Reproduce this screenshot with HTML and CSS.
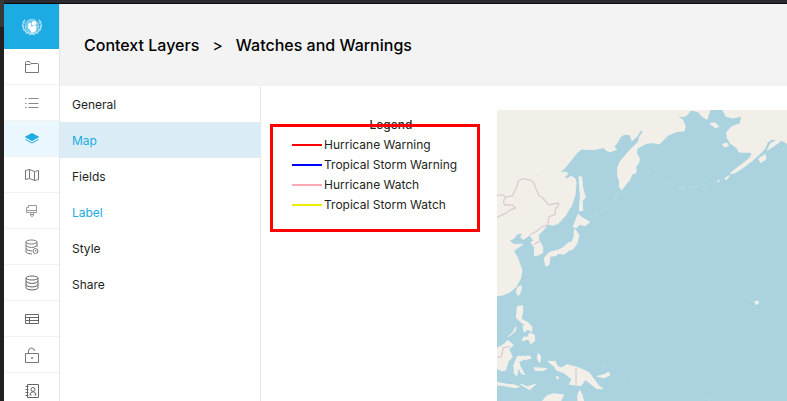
FILE: index.html
```html
<!DOCTYPE html>
<html lang="en">
<head>
<meta charset="utf-8">
<meta name="viewport" content="width=device-width, initial-scale=1">
<title>Watches and Warnings</title>
<link rel="stylesheet" href="styles.css">
</head>
<body>
<div class="app">
  <nav class="rail" aria-label="Main">
    <a class="rail-logo" href="#" aria-label="Home">
      <svg width="20" height="18" viewBox="0 0 60 54" fill="none" stroke="#fff">
        <circle cx="30" cy="24" r="20" fill="#6cc6ec" stroke="#c5e8f7" stroke-width="2"/>
        <path d="M13 24h34M17 12q13 9 26 0M17 36q13-9 26 0" stroke="#c5e8f7" stroke-width="1"/>
        <circle cx="36" cy="16" r="7" fill="#fff" stroke="none"/>
        <path d="M31 24q7-4 13 2l-3 14-12 4-5-9-7-6 4-8 5-1 4 9z" fill="#fff" stroke="none"/>
        <circle cx="23" cy="20" r="5" fill="#fff" stroke="none"/>
        <path d="M9 5Q-3 20 6 34q8 13 24 13t24-13q9-14-3-29" stroke="#b5e2f5" stroke-width="4"/>
        <path d="M3 9l6 8M0 22l8 5M2 35l9 1M11 46l9-3M57 9l-6 8M60 22l-8 5M58 35l-9 1M49 46l-9-3M21 52l9-5 9 5" stroke="#b5e2f5" stroke-width="3"/>
      </svg>
    </a>
    <a href="#" aria-label="Projects"><svg class="icon" viewBox="0 0 14 14"><path d="M.5 12.5v-10q0-1 1-1h3l1.500 2h6.500q1 0 1 1v8zM.5 4.500h5"/></svg></a>
    <a href="#" aria-label="List"><svg class="icon list" viewBox="0 0 14 14"><path d="M3.500 2.500h10M3.500 7.500h10M3.500 11.500h10M0 2.500h1.500M0 7.500h1.500M0 11.500h1.500"/></svg></a>
    <a class="current" href="#" aria-label="Context layers"><svg class="icon layers" viewBox="0 0 14 14"><path d="M7 1.500 13.500 5 7 8.500.5 5z"/><path class="edge" d="M.5 7.500 7 11l6.500-3.500"/></svg></a>
    <a href="#" aria-label="Maps"><svg class="icon" viewBox="0 0 14 14"><path d="m.5 2.500 4-1 5 2 4-1v9l-4 1-5-2-4 1zM4.500 1.500v9M9.500 3.500v9"/></svg></a>
    <a href="#" aria-label="Styles"><svg class="icon brush" viewBox="0 0 14 14"><path d="M3.500 1.500h8v5h-10v-3h2zM1.500 6.500v2h10v-2M5.500 8.500v3q1.500 2 3 0v-3M6 10.500h2M11.500 2v4"/></svg></a>
    <a href="#" aria-label="Data settings"><svg class="icon" viewBox="0 0 14 16"><ellipse cx="6.500" cy="3" rx="5.500" ry="2"/><path d="M1 3v10q1 2 6 2M12 3v5M1 6q1 2.500 5.500 2.500T12 6M1 9.500Q2 12 7 12"/><circle cx="10.500" cy="12" r="2.500"/><path d="M10.500 11v1h1"/></svg></a>
    <a href="#" aria-label="Database"><svg class="icon dark" viewBox="0 0 14 16"><ellipse cx="7" cy="3" rx="6" ry="2"/><path d="M1 3v10q1 2 6 2t6-2V3M1 6q1 2.500 6 2.500T13 6M1 9.500Q2 12 7 12t6-2.500"/></svg></a>
    <a href="#" aria-label="Tables"><svg class="icon dark" viewBox="0 0 14 14"><path d="M.5 2.500h13v9H.5zM.5 5.500h13M.5 8.500h13M4.500 5.500v6"/></svg></a>
    <a href="#" aria-label="Access"><svg class="icon" viewBox="0 0 14 16"><path d="M.5 6.500h13v9H.5zM3.500 6.500V4q0-3 3-3t3 3M6.500 10.500h1v1h-1z"/></svg></a>
    <a href="#" aria-label="Contacts"><svg class="icon dark" viewBox="0 0 14 14"><path d="M2.500.5h11v13h-11zM.5 2.500h3M.5 5.500h3M.5 8.500h3M.5 11.500h3M5 11q0-2.500 2-3h2q2 .5 2 3H9.500M5 11h1.500"/><circle cx="8" cy="5.500" r="2"/></svg></a>
  </nav>
  <div class="page">
    <header class="crumbs">
      <a href="#">Context Layers</a><span>&gt;</span><h1>Watches and Warnings</h1>
    </header>
    <div class="body">
      <nav class="tabs" aria-label="Layer">
        <a href="#">General</a>
        <a class="selected" href="#">Map</a>
        <a href="#">Fields</a>
        <a class="accent" href="#">Label</a>
        <a href="#">Style</a>
        <a href="#">Share</a>
      </nav>
      <main class="content">
        <section class="legend">
          <h2>Legend</h2>
          <ul>
            <li><i class="line red"></i>Hurricane Warning</li>
            <li><i class="line blue"></i>Tropical Storm Warning</li>
            <li><i class="line pink"></i>Hurricane Watch</li>
            <li><i class="line yellow"></i>Tropical Storm Watch</li>
          </ul>
          <div class="highlight"></div>
        </section>
        <div class="map">
          <svg viewBox="21 30 870 873" preserveAspectRatio="xMinYMin slice" role="img" aria-label="Map of the western Pacific">
            <g class="land">
              <path d="M21 30H602L592 44 582 50 560 48 578 60 586 80 582 93 562 94 535 105 520 120 508 132 490 128 470 130 454 138 441 146 440 160 448 175 446 190 438 198 438 218 425 224 419 240 408 252 395 270 388 260 389 245 383 228 383 203 390 185 405 168 420 150 445 126 448 112 460 94 452 91 440 110 426 122 420 104 402 103 390 112 382 128 371 141 380 148 362 155 350 152 340 143 310 149 275 147 262 157 240 185 225 203 208 219 225 216 235 221 222 231 232 236 244 229 256 237 258 250 255 285 245 315 225 348 205 370 188 376 173 372 163 387 145 405 147 421 158 440 158 458 145 465 133 467 134 443 123 427 132 423 119 405 101 418 92 412 98 399 81 402 72 415 58 421 70 433 98 433 83 444 70 453 83 474 88 490 96 511 92 534 78 561 58 577 38 585 21 587Z"/>
              <path d="M602 30 625 35 635 48 651 58 660 30ZM699 30 708 49 730 54 755 48 751 71 725 80 710 97 712 114 721 130 733 138 741 145 747 156 782 157 786 165 776 177 753 195 733 210 720 221 736 218 762 201 790 179 811 160 825 145 832 127 846 117 861 120 842 131 832 151 853 137 875 121 891 130V30Z"/>
              <path d="M660 71 675 68 686 79 677 84ZM698 133 710 129 716 137 703 141ZM806 176 825 164 828 177 812 188ZM704 235 718 227 709 240ZM681 244 690 240 685 246Z"/>
              <path d="M267 230 275 231 278 262 286 292 277 302 278 332 268 332 271 290ZM264 343 280 355 299 366 286 377 268 373 260 383 249 380 254 370ZM254 387 267 405 261 430 249 447 237 451 222 463 205 460 197 467 180 469 177 494 168 498 162 475 178 457 205 450 219 443 233 430 246 425 252 410ZM84 561 95 557 92 575 85 587 79 575Z"/>
              <path d="M82 620 98 617 98 637 93 656 110 667 108 674 91 665 79 653ZM111 665 126 680 125 695 114 688 103 696 99 680ZM119 699 133 705 134 723 122 731 116 717 97 722 101 711 113 712ZM78 680 76 693 55 710 70 695Z"/>
              <path d="M21 745 42 733 53 721 70 736 56 748 67 770 54 785 47 810 36 813 21 805ZM82 770 120 768 123 775 100 779 86 785 90 798 104 824 94 820 86 802 80 827 72 820 73 802 70 798 77 783ZM21 847 45 852 74 855 88 860 75 863 42 857 21 854ZM92 853 112 860 137 853 119 869ZM145 759 152 770 149 788 142 775ZM133 803 171 806 157 812 136 811Z"/>
              <path d="M174 784 196 784 201 798 213 804 232 794 267 804 298 818 308 833 325 855 338 867 319 865 300 850 286 838 273 857 238 853 246 837 221 818 199 810 194 800ZM322 829 345 823 355 816 360 825 342 833ZM158 903 170 888 190 881 221 885 212 903ZM264 903 263 887 269 871 276 885 281 903Z"/>
              <path d="M199 829 207 833 202 838ZM794 605 804 603 806 609 799 614Z"/>
            </g>
            <g class="islets">
              <path d="M299 353 323 341M333 334 355 325M372 300 388 273M455 150 462 153M472 210 478 220M528 243 541 254M568 263 589 265M597 262 624 260M634 257 649 254M662 250 700 238M763 586 793 600M142 226 151 219M170 525 178 513M337 795 355 803M374 826 387 837M394 839 409 851M420 855 438 874M648 896 660 901"/>
            </g>
            <path class="border" d="M21 287 37 284 47 291 67 288 81 260 84 243 98 236 119 240 130 246 147 287 156 291 176 315 206 309 205 318 197 324 195 344 177 350 173 375 157 380 139 394 119 405M47 291 40 304 44 315 67 315 77 324 60 330 45 341 21 352M132 433 152 422M21 772 34 770 40 743 60 739M258 804V856"/>
          </svg>
        </div>
      </main>
    </div>
  </div>
</div>
</body>
</html>
```

FILE: styles.css
```css
* { box-sizing: border-box; }

body {
  margin: 0;
  font-family: Inter, "Liberation Sans", sans-serif;
  font-size: 12px;
  color: #231f20;
}

a { color: inherit; text-decoration: none; }

.app {
  display: flex;
  height: 100vh;
  overflow: hidden;
  padding: 4px 0 0 4px;
  background:
    linear-gradient(#2b2a33 3px, #0c0c0d 3px) 4px 0 / 100% 4px no-repeat,
    linear-gradient(#38383a 27px, #231f20 27px) 0 0 / 4px 100% no-repeat,
    #fff;
}

.rail {
  flex: none;
  width: 56px;
  border-right: 1px solid #e5e5e5;
}

.rail a {
  display: flex;
  align-items: center;
  justify-content: center;
  height: 36px;
  border-bottom: 1px solid #f2f2f2;
}

.rail .rail-logo {
  height: 45px;
  border: 0;
  background: #1cabe2;
}

.rail .current { background: #ebf7fe; }

.icon {
  width: 14px;
  height: 16px;
  fill: none;
  stroke: #777;
  stroke-width: 1;
}

.icon.dark { stroke: #666; }
.icon.list { stroke: #888; }
.icon.brush { stroke: #999; }
.icon.layers { fill: #1cabe2; stroke: #1cabe2; }
.icon .edge { fill: none; }

.page {
  display: flex;
  flex: 1;
  flex-direction: column;
  min-width: 0;
}

.crumbs {
  display: flex;
  flex: none;
  align-items: center;
  gap: 13px;
  height: 82px;
  padding: 0 24px;
  background: #f3f3f3;
  color: #000;
  font-size: 16px;
  font-weight: 500;
}

.crumbs span { font-weight: 400; }
.crumbs h1 { margin: 0; font: inherit; }

.body { display: flex; flex: 1; min-height: 0; }

.tabs {
  flex: none;
  width: 201px;
  border-right: 1px solid #e5e5e5;
}

.tabs a {
  display: block;
  padding: 2px 12px 0;
  line-height: 34px;
}

.tabs .selected {
  margin-right: -1px;
  background: #daedf7;
  color: #1cabe2;
}

.tabs .accent { color: #1cabe2; }

.content {
  display: flex;
  flex: 1;
  gap: 17px;
  min-width: 0;
  padding: 24px 0 0 9px;
}

.legend {
  position: relative;
  flex: none;
  width: 210px;
  padding: 5px 0 0 22px;
  line-height: 20px;
}

.legend h2 {
  width: 198px;
  margin: 0;
  font-size: 12px;
  font-weight: 500;
  line-height: 20px;
  text-align: center;
}

.legend ul { margin: 0; padding: 0; list-style: none; }

.legend li {
  display: flex;
  align-items: center;
  gap: 2px;
}

.line { width: 30px; height: 2px; }
.red { background: #f00; }
.blue { background: #00f; }
.pink { background: #ffa9b8; }
.yellow { background: #eeee00; }

.highlight {
  position: absolute;
  top: 14px;
  right: 0;
  left: 0;
  height: 108px;
  border: 3px solid #f00;
}

.map {
  flex: 1;
  min-width: 0;
  overflow: hidden;
  background: #aad3df;
}

.map svg { display: block; width: 100%; height: 100%; filter: blur(0.6px); }

.land { fill: #f2efe9; stroke: #f2efe9; stroke-width: 3; stroke-linejoin: round; }
.islets { fill: none; stroke: #c6dfdf; stroke-width: 3; stroke-dasharray: 6 5; }
.border { fill: none; stroke: #dccdd5; stroke-width: 4; stroke-linejoin: round; }
```
